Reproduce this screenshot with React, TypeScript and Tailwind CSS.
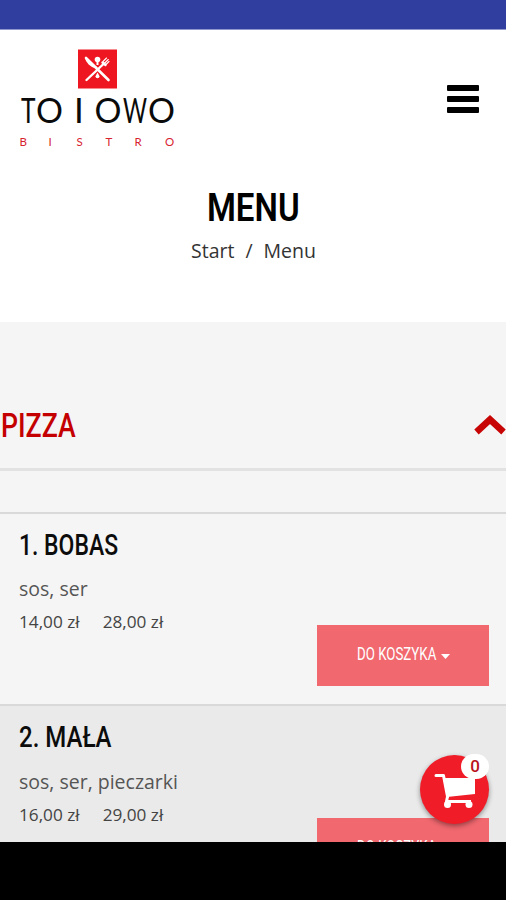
import React from 'react';

interface MenuItem {
  title: string;
  titleClass: string;
  ingredients: string;
  ingredientsClass: string;
  prices: string[];
  shaded?: boolean;
}

const ITEMS: MenuItem[] = [
  { title: '1. BOBAS', titleClass: 'scale-x-[0.765]', ingredients: 'sos, ser', ingredientsClass: 'mt-[11px]', prices: ['14,00 zł', '28,00 zł'] },
  { title: '2. MAŁA', titleClass: 'scale-x-[0.8]', ingredients: 'sos, ser, pieczarki', ingredientsClass: 'mt-[12px]', prices: ['16,00 zł', '29,00 zł'], shaded: true },
];

const Logo: React.FC = () => (
  <svg width="164" height="106" viewBox="0 0 164 106" role="img" aria-label="To i owo bistro">
    <rect x="62" y="3.500" width="39" height="39" fill="#ee1620" />
    <g stroke="#fff" fill="none" strokeLinecap="round">
      <path d="M70 12L92.500 34" strokeWidth="2.6" />
      <path d="M70 12C70.500 16 75 20 80 21.500" strokeWidth="2" />
      <path d="M70.500 34L88 17.500" strokeWidth="2.4" />
      <path d="M87 15.500L90.500 12M88.800 17L92.300 13.500M90 18.500L93 15.500" strokeWidth="1.1" />
      <path d="M86.500 16.500L89.500 19" strokeWidth="2.4" />
    </g>
    <g fill="#fff">
      <ellipse cx="81.500" cy="13.500" rx="2.800" ry="2.800" />
      <path d="M80.500 15h2v4h-2zM81.500 26.500l2.200 4a2.300 2.300 0 0 1-4.400 0z" />
    </g>
    <g fill="#0a0a0a" fontFamily="Lato, sans-serif" fontSize="35">
      <text y="77" x="5" textLength="14.5" lengthAdjust="spacingAndGlyphs">T</text>
      <text y="77" x="20" textLength="27" lengthAdjust="spacingAndGlyphs">O</text>
      <text y="77" x="58">I</text>
      <text y="77" x="78.5" textLength="27" lengthAdjust="spacingAndGlyphs">O</text>
      <text y="77" x="107" textLength="24" lengthAdjust="spacingAndGlyphs">W</text>
      <text y="77" x="132" textLength="27" lengthAdjust="spacingAndGlyphs">O</text>
    </g>
    <text y="100" x="3.5 32.5 60.5 89.5 118.5 149" fill="#d8232f" fontFamily="Lato, sans-serif" fontSize="11.5">BISTRO</text>
  </svg>
);

const CartIcon: React.FC = () => (
  <svg width="42" height="36" viewBox="0 0 42 36" fill="#fff" className="mt-[3px]">
    <path d="M2 2.500h7.500l4 21" fill="none" stroke="#fff" strokeWidth="3" strokeLinecap="round" strokeLinejoin="round" />
    <path d="M9 5h32v16L13 24z" />
    <path d="M14 21l-1.500 7.500H37" fill="none" stroke="#fff" strokeWidth="3" />
    <circle cx="13.500" cy="31.500" r="3.500" />
    <circle cx="35" cy="31.500" r="3.500" />
  </svg>
);

const MenuRow: React.FC<{ item: MenuItem }> = ({ item }) => (
  <article className={`h-[192px] shrink-0 border-t-2 border-[#d9d9d9] pl-[19px] pr-[17px] ${item.shaded ? 'bg-[#eaeaea]' : 'bg-[#f5f5f5]'}`}>
    <h3 className={`pt-[11px] w-max origin-left font-[Roboto] font-medium text-[30px] leading-[40px] text-[#0c0c0c] ${item.titleClass}`}>
      {item.title}
    </h3>
    <p className={`w-max text-[19.5px] leading-[26px] text-[#555] ${item.ingredientsClass}`}>{item.ingredients}</p>
    <div className="flex justify-between">
      <div className="mt-[8px] flex gap-[23px] text-[17.2px] leading-[24px] text-[#444]">
        {item.prices.map((price) => (
          <span key={price} className="whitespace-nowrap">{price}</span>
        ))}
      </div>
      <button className="mt-[23px] flex h-[61px] w-[172px] items-center justify-center bg-[#f1686f] pb-[2px] font-[Roboto] text-[17.5px] text-white">
        <span className="w-[80px]">
          <span className="block w-max origin-left scale-x-[0.76]">DO KOSZYKA</span>
        </span>
        <svg width="9" height="5" viewBox="0 0 9 5" className="ml-[4px] mt-[4px]">
          <path d="M0 0h9L4.500 5z" fill="#fff" />
        </svg>
      </button>
    </div>
  </article>
);

export default function App() {
  return (
    <div className="relative flex h-[900px] w-[506px] flex-col overflow-hidden bg-black font-['Open_Sans',sans-serif]">
      <div className="h-[30px] shrink-0 border-b border-[#8f97cf] bg-[#303f9f]" />

      <header className="h-[292px] shrink-0 bg-white">
        <div className="flex items-start justify-between pl-4 pr-[27px] pt-[16px]">
          <Logo />
          <button aria-label="Menu" className="mt-[39px] flex w-8 flex-col gap-[5px]">
            <span className="h-[6px] rounded-[1px] bg-black" />
            <span className="h-[6px] rounded-[1px] bg-black" />
            <span className="h-[6px] rounded-[1px] bg-black" />
          </button>
        </div>
        <div className="flex flex-col items-center pt-[34px]">
          <h1 className="scale-x-[0.87] font-[Roboto] text-[38px] font-semibold leading-[44px] text-black">MENU</h1>
          <nav className="mt-[7px] flex gap-[11px] pl-px text-[19.5px] leading-[28px] text-[#333]">
            <span>Start</span>
            <span>/</span>
            <span>Menu</span>
          </nav>
        </div>
      </header>

      <main className="flex h-[520px] shrink-0 flex-col overflow-hidden bg-[#f5f5f5]">
        <div className="flex h-[149px] shrink-0 items-start justify-between border-b-[3px] border-[#e2e2e2] pt-[81px]">
          <h2 className="ml-px w-max origin-left scale-x-[0.785] font-[Roboto] text-[34px] font-medium leading-[44px] text-[#c40000]">PIZZA</h2>
          <svg width="32" height="22" viewBox="0 0 32 22" className="mt-[10px]">
            <path d="M2.500 19L16 6.500L29.500 19" fill="none" stroke="#c80505" strokeWidth="6.5" />
          </svg>
        </div>
        <div className="h-[41px] shrink-0" />
        {ITEMS.map((item) => (
          <MenuRow key={item.title} item={item} />
        ))}
      </main>

      <button aria-label="Koszyk" className="absolute left-[420px] top-[755px] flex h-[69px] w-[69px] items-center justify-center rounded-full bg-[#f01c28] shadow-[0_2px_5px_rgba(0,0,0,0.4)]">
        <CartIcon />
        <span className="absolute -top-px left-[41px] flex h-[25px] w-[28px] items-center justify-center rounded-full bg-white font-[Roboto] text-[17px] font-medium text-[#b8131c]">0</span>
      </button>
    </div>
  );
}
